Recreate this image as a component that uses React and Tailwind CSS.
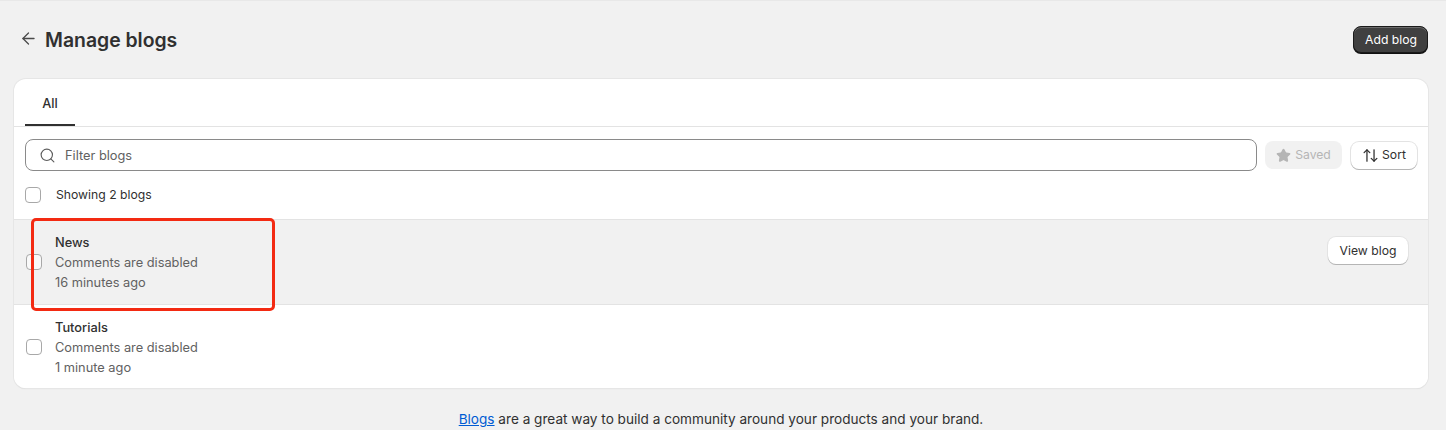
import { ArrowLeft, Search, Star, ArrowUpDown } from "lucide-react";

const blogs = [
  { name: "News", time: "16 minutes ago", hover: true },
  { name: "Tutorials", time: "1 minute ago" },
];

const Checkbox = () => (
  <span className="block h-4 w-4 shrink-0 rounded-[4px] border border-[#a8a8a8] bg-white/60" />
);

const BlogRow = ({ name, time, hover }) => (
  <div
    className={`flex h-[84px] items-center border-t border-[#e3e3e3] pl-3 pr-5 ${
      hover ? "h-[85px] bg-[#f1f1f1]" : "bg-white"
    }`}
  >
    <Checkbox />
    <div className="ml-[13px] flex flex-col pt-[2px] text-[12.8px] leading-5 text-[#616161]">
      <span className="font-medium text-[#303030]">{name}</span>
      <span>Comments are disabled</span>
      <span>{time}</span>
    </div>
    {hover && (
      <button className="mb-6 ml-auto h-[27px] w-[80px] rounded-lg bg-white pt-[2px] text-[12.2px] text-[#303030] shadow-[0_1px_0_0_#b5b5b5,0_0_0_1px_#e3e3e3]">
        View blog
      </button>
    )}
  </div>
);

export default function App() {
  return (
    <div className="relative h-[430px] overflow-hidden border-t border-[#e8e8e8] bg-[#f1f1f1] pl-[14px] pr-[18px] font-['Inter',sans-serif] text-[#303030] antialiased">
      {/* Header */}
      <div className="flex h-[78px] items-center pl-[5px]">
        <ArrowLeft className="mb-1 h-[19px] w-[19px] shrink-0 text-[#4a4a4a]" strokeWidth={1.6} />
        <h1 className="ml-[7px] mt-[1px] text-[19.4px] font-semibold">Manage blogs</h1>
        <button className="mb-[2px] ml-auto h-[27px] w-[75px] rounded-lg border border-[#1a1a1a] bg-[#404040] pt-[3px] pl-[1px] text-[12.2px] text-white shadow-[inset_0_1px_0_0_#6b6b6b,0_1px_0_0_#111]">
          Add blog
        </button>
      </div>

      {/* Card */}
      <div className="overflow-hidden rounded-xl bg-white shadow-[0_0_0_1px_#e6e6e6,0_1px_1px_0_#cfcfcf]">
        <div className="flex h-[47px] px-[11px]">
          <div className="flex w-[50px] items-center justify-center border-b-2 border-[#303030] pt-1 text-[12.8px] font-medium">
            All
          </div>
        </div>
        <div className="border-t border-[#e3e3e3] px-[11px] pt-3">
          <div className="flex items-center">
            <div className="flex h-8 flex-1 items-center rounded-lg border border-[#8a8a8a] pl-[13px]">
              <Search className="h-[17px] w-[17px] text-[#5c5c5c]" strokeWidth={1.6} />
              <span className="ml-[9px] pt-[2px] text-[12.8px] text-[#616161]">Filter blogs</span>
            </div>
            <div className="ml-2 flex h-7 w-[77px] items-center justify-center gap-1 rounded-lg bg-[#ebebeb]/70 pt-[1px] text-[12.2px] text-[#b5b5b5]">
              <Star className="h-[15px] w-[15px] fill-[#b5b5b5] text-[#b5b5b5]" />
              Saved
            </div>
            <button className="ml-[9px] flex h-[27px] w-[66px] items-center justify-center gap-[3px] rounded-lg bg-white pt-[1px] text-[12.2px] shadow-[0_1px_0_0_#b5b5b5,0_0_0_1px_#e3e3e3]">
              <ArrowUpDown className="h-[17px] w-[17px]" strokeWidth={1.8} />
              Sort
            </button>
          </div>
          <div className="flex h-12 items-center pb-[1px]">
            <Checkbox />
            <span className="ml-[15px] pt-[2px] text-[12.2px]">Showing 2 blogs</span>
          </div>
        </div>
        {blogs.map((blog) => (
          <BlogRow key={blog.name} {...blog} />
        ))}
      </div>

      {/* Footer */}
      <p className="mt-[21px] text-center text-[13.6px] leading-5">
        <a className="text-[#005bd3] underline">Blogs</a> are a great way to build a community around your products and your brand.
      </p>

      {/* Red annotation */}
      <div className="absolute left-[31px] top-[217px] h-[93px] w-[244px] rounded-[5px] border-[3px] border-[#f32a12]" />
    </div>
  );
}
